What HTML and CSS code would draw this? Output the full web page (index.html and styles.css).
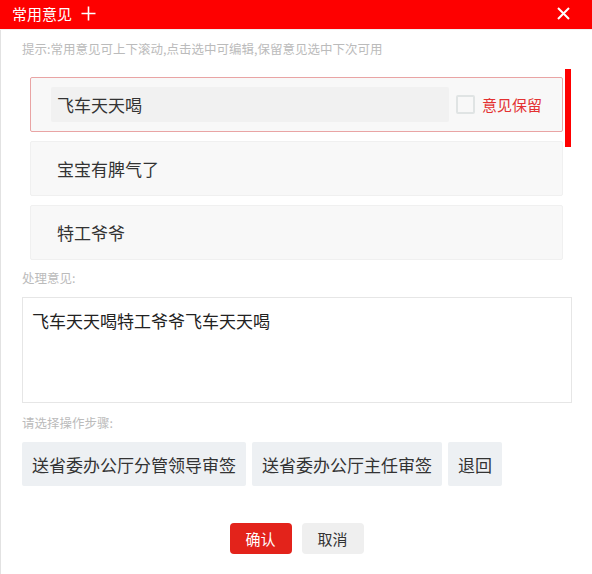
FILE: index.html
```html
<!DOCTYPE html>
<html lang="zh">
<head>
<meta charset="utf-8">
<title>常用意见</title>
<link rel="stylesheet" href="styles.css">
</head>
<body>
<div class="dialog">
  <header class="header">
    <div class="title">常用意见</div>
    <svg class="plus" width="15" height="15" viewBox="0 0 15 15"><path d="M7.5 0.5V14.5M0.5 7.5H14.5" stroke="#fff" stroke-width="1.6" fill="none"/></svg>
    <div class="spacer"></div>
    <svg class="close" width="13" height="13" viewBox="0 0 13 13"><path d="M1 1L12 12M12 1L1 12" stroke="#fff" stroke-width="2" fill="none"/></svg>
  </header>
  <main class="body">
    <div class="hint">提示:常用意见可上下滚动,点击选中可编辑,保留意见选中下次可用</div>
    <div class="list">
      <div class="items">
        <div class="item item-active">
          <div class="input">飞车天天喝</div>
          <div class="checkbox"></div>
          <div class="keep">意见保留</div>
        </div>
        <div class="item">宝宝有脾气了</div>
        <div class="item">特工爷爷</div>
      </div>
      <div class="track"><div class="thumb"></div></div>
    </div>
    <div class="label label-opinion">处理意见:</div>
    <div class="textarea">飞车天天喝特工爷爷飞车天天喝</div>
    <div class="label label-steps">请选择操作步骤:</div>
    <div class="steps">
      <div class="step">送省委办公厅分管领导审签</div>
      <div class="step">送省委办公厅主任审签</div>
      <div class="step">退回</div>
    </div>
    <div class="actions">
      <div class="btn btn-ok">确认</div>
      <div class="btn btn-cancel">取消</div>
    </div>
  </main>
</div>
</body>
</html>
```

FILE: styles.css
```css
* { box-sizing: border-box; }
html, body { margin: 0; padding: 0; background: #fff; }
body {
  width: 592px;
  height: 574px;
  overflow: hidden;
  font-family: "Noto Sans CJK SC", "Noto Sans", sans-serif;
}
.dialog { width: 592px; height: 574px; display: flex; flex-direction: column; }
.header {
  height: 30px;
  background: #fe0000;
  border-bottom: 1px solid #f0f0f0;
  display: flex;
  align-items: center;
  padding: 0 22px 0 12px;
  color: #fff;
}
.title { font-size: 15px; line-height: 20px; margin-top: -2px; }
.plus { margin-left: 9px; margin-top: -2px; }
.spacer { flex: 1; }
.close { margin-top: -2px; }
.body {
  flex: 1;
  border-left: 1px solid #e2e2e2;
  padding: 0 0 0 21px;
}
.hint, .label {
  font-size: 12.5px;
  line-height: 16px;
  color: #bbbbbb;
}
.hint { margin-top: 11px; }
.list {
  margin-top: 12px;
  display: flex;
  gap: 2px;
  padding-left: 8px;
}
.items {
  width: 533px;
  padding-top: 8px;
  display: flex;
  flex-direction: column;
  gap: 9px;
}
.item {
  height: 55px;
  background: #f8f8f8;
  border: 1px solid #f0f0f0;
  border-radius: 2px;
  display: flex;
  align-items: center;
  padding-left: 26px;
  font-size: 17px;
  color: #333;
}
.item-active {
  border-color: #e9a4a4;
  padding-left: 20px;
}
.input {
  width: 398px;
  height: 35px;
  background: #f1f1f1;
  border-radius: 2px;
  padding-left: 6px;
  display: flex;
  align-items: center;
}
.checkbox {
  width: 19px;
  height: 19px;
  margin-left: 7px;
  border: 2px solid #e0e4e4;
  border-radius: 2px;
  background: #f8f8f8;
}
.keep {
  margin-left: 7px;
  font-size: 15px;
  color: #e33232;
}
.track { width: 6px; }
.thumb { width: 6px; height: 78px; background: #ff0000; }
.label-opinion { margin-top: 10px; }
.textarea {
  margin-top: 11px;
  width: 550px;
  height: 106px;
  border: 1px solid #e6e6e6;
  padding: 10px 9px;
  font-size: 17px;
  line-height: 26px;
  color: #222;
}
.label-steps { margin-top: 12px; }
.steps {
  margin-top: 11px;
  display: flex;
  gap: 6px;
}
.step {
  height: 44px;
  padding: 0 10px;
  background: #edf0f3;
  border-radius: 2px;
  display: flex;
  align-items: center;
  font-size: 17px;
  color: #333;
}
.actions {
  margin-top: 37px;
  display: flex;
  justify-content: center;
  gap: 10px;
  padding-right: 21px;
}
.btn {
  width: 62px;
  height: 31px;
  border-radius: 4px;
  display: flex;
  align-items: center;
  justify-content: center;
  font-size: 15px;
}
.btn-ok { background: #e3231b; color: #fff; }
.btn-cancel { background: #efefef; color: #333; }
```
